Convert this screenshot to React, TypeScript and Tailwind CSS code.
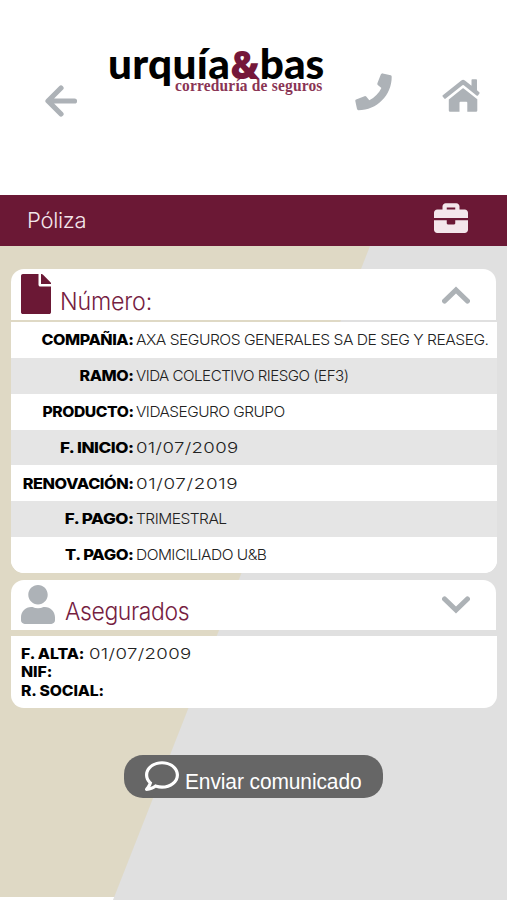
import React from "react";
import { FaBriefcase, FaFile, FaUser, FaRegComment } from "react-icons/fa";

const rows = [
  { label: "COMPAÑIA:", value: "AXA SEGUROS GENERALES SA DE SEG Y REASEG.", l: "scale-x-[1.07]", v: "tracking-[-0.5px] scale-x-[1.042]" },
  { label: "RAMO:", value: "VIDA COLECTIVO RIESGO (EF3)", l: "scale-x-[1.07]", v: "tracking-[-0.5px] scale-x-[1.01]" },
  { label: "PRODUCTO:", value: "VIDASEGURO GRUPO", l: "scale-x-[1.045]", v: "tracking-[-0.5px] scale-x-[1.027]" },
  { label: "F. INICIO:", value: "01/07/2009", l: "scale-x-[1.14]", v: "tracking-[0.3px] scale-x-[1.24]" },
  { label: "RENOVACIÓN:", value: "01/07/2019", l: "scale-x-[1.085]", v: "tracking-[0.5px] scale-x-[1.255]" },
  { label: "F. PAGO:", value: "TRIMESTRAL", l: "scale-x-[1.135]", v: "tracking-[-0.5px] scale-x-[1.035]" },
  { label: "T. PAGO:", value: "DOMICILIADO U&B", l: "scale-x-[1.105]", v: "tracking-[-0.5px] scale-x-[1.035]" },
];

function Chevron({ down = false }: { down?: boolean }) {
  return (
    <svg viewBox="0 0 28 18" className={"h-[18px] w-[28px] " + (down ? "rotate-180" : "")} fill="none" stroke="#adb2b6" strokeWidth="5.2" strokeLinecap="round">
      <path d="M2.600 15 14 4 25.400 15" />
    </svg>
  );
}

export default function App() {
  return (
    <div className="flex h-[900px] w-[507px] flex-col overflow-hidden bg-white font-['Inter',sans-serif] text-black">
      <header className="flex h-[195px] shrink-0 items-start">
        <svg viewBox="0 0 34 32" className="mt-[85px] ml-[44px] h-8 w-[34px] shrink-0" fill="none" stroke="#adb2b7" strokeWidth="5.2" strokeLinecap="round" strokeLinejoin="round">
          <path d="M17 3 4 16 17 29M4.5 16H30.500" />
        </svg>
        <div className="mt-[39px] ml-[30px] w-[216px] shrink-0 whitespace-nowrap">
          <div className="flex h-[40px] origin-left scale-x-[1.02] items-baseline font-['Lato',sans-serif] text-[41.5px] leading-[48px] font-black">
            <span className="tracking-[0.3px]">urquía</span><span className="w-[29px] origin-left scale-x-[0.93] font-['Open_Sans',sans-serif] text-[38px] leading-[48px] font-extrabold text-[#75173a]">&amp;</span>bas
          </div>
          <div className="ml-[66px] w-fit origin-left scale-x-[0.965] pl-[1px] font-['Liberation_Serif',serif] text-[16px] leading-[14px] font-bold tracking-[0.2px] text-[#8a3454]">
            correduría de seguros
          </div>
        </div>
        <svg viewBox="0 0 37 38" className="mt-[73px] ml-[31px] h-[38px] w-[37px] shrink-0" fill="#adb2b7">
          <path d="M26.500 .7Q27 .2 27.700 .4L35.700 2.300Q36.700 2.600 36.700 3.700C36.700 22 22 37.200 3.400 37.200Q2.300 37.200 2 36.100L.3 28Q.1 26.900 1.100 26.500L9.500 23.200Q10.500 22.800 11.200 23.600L14.300 27.300C19.600 24.700 24 20.200 26.400 15L22.800 12Q22 11.300 22.400 10.300L25.800 1.600Z" />
        </svg>
        <svg viewBox="0 0 38 34" className="mt-[79px] ml-[50px] h-[34px] w-[38px] shrink-0" fill="#adb2b7">
          <path d="M.6 17.500Q.1 16.800.8 16.200L19.300 1.400Q21.100.2 22.900 1.400L29.500 6.800V1Q29.500.2 30.300.2H34.200Q35 .2 35 1V11.300L37.300 13.200Q38 13.800 37.400 14.600L36 16.400Q35.300 17.200 34.500 16.500L21.800 6.300Q21.100 5.800 20.400 6.300L3.700 19.600Q2.900 20.200 2.300 19.500Z" />
          <path d="M6.800 20.400 20.500 9.400Q21.100 9 21.700 9.400L35.300 20.300V31.500Q35.300 32.800 34 32.800H25.300V23.800Q25.300 22.800 24.300 22.800H18.500Q17.500 22.800 17.500 23.800V32.800H8.100Q6.800 32.800 6.800 31.500Z" />
        </svg>
      </header>

      <div className="flex h-[51px] shrink-0 items-center justify-between bg-[#6b1835] pr-[39px] pl-[27px] text-[#f3e6eb]">
        <span className="text-[22px] font-light tracking-[-0.3px]">Póliza</span>
        <FaBriefcase className="mt-[-5px] h-[34px] w-[34px]" />
      </div>

      <main className="flex h-[654px] shrink-0 flex-col bg-[linear-gradient(#dfd9c5_0_651px,#ffffff_651px)]">
        <div className="flex h-full flex-col bg-[#e0e0e0] [clip-path:polygon(370px_0,507px_0,507px_654px,113px_654px)]" />
        <div className="relative z-10 -mt-[654px] flex h-full flex-col pt-[23px] pr-[10px] pl-[11px]">
          <section>
            <div className="mr-[1px] flex h-[51px] items-start rounded-t-[13px] bg-white pr-[26px] pl-[10px]">
              <FaFile className="mt-[5px] h-[40px] w-[30px] text-[#6b1835]" />
              <h2 className="mt-[15.5px] ml-[9px] flex-1 origin-left scale-x-[0.968] text-[24px] leading-[34px] font-light tracking-[-0.2px] text-[#75203f]">Número:</h2>
              <div className="mt-[17px]"><Chevron /></div>
            </div>
            <div className="mt-[2px] overflow-hidden rounded-b-[13px] bg-white">
              {rows.map((r, i) => (
                <div key={r.label} className={"flex h-[35.86px] items-center pt-px text-[15px] whitespace-nowrap " + (i % 2 ? "bg-[#e5e5e5]" : "bg-white")}>
                  <span className={"w-[122.5px] shrink-0 origin-right text-right font-extrabold tracking-[-0.4px] " + r.l}>{r.label}</span>
                  <span className={"ml-[2.5px] origin-left font-light text-[#222] " + r.v}>{r.value}</span>
                </div>
              ))}
            </div>
          </section>

          <section className="mt-[7px]">
            <div className="mr-[1px] flex h-[50px] items-start rounded-t-[13px] bg-white pr-[26px] pl-[10px]">
              <FaUser className="mt-[5px] h-[39px] w-[34px] text-[#adb2b7]" />
              <h2 className="mt-[14.5px] ml-[10px] flex-1 text-[24px] leading-[34px] font-light text-[#75203f]">
                <span className="inline-block origin-left scale-x-[0.955] tracking-[-0.4px]">Asegurados</span>
              </h2>
              <div className="mt-[16px]"><Chevron down /></div>
            </div>
            <div className="mt-[6px] h-[72px] rounded-b-[13px] bg-white pt-[8.5px] pl-[10px] text-[15px] leading-[18.5px]">
              <p className="flex">
                <b className="w-[68px] origin-left scale-x-[1.06] font-extrabold tracking-[-0.1px]">F. ALTA:</b>
                <span className="origin-left scale-x-[1.24] font-light tracking-[0.3px] text-[#222]">01/07/2009</span>
              </p>
              <p className="w-fit origin-left scale-x-[1.06] font-extrabold tracking-[-0.1px]">NIF:</p>
              <p className="w-fit origin-left scale-x-[1.05] font-extrabold tracking-[-0.1px]">R. SOCIAL:</p>
            </div>
          </section>

          <button className="mt-[47px] ml-[113px] flex h-[43px] w-[259px] items-start rounded-[19px] bg-[#666666] pl-[21px] text-white">
            <FaRegComment className="mt-[4px] h-[34px] w-[34px]" />
            <span className="mt-[10.5px] ml-[6px] origin-left scale-x-[0.952] font-['Liberation_Sans',sans-serif] text-[22px] leading-[32px] tracking-[-0.1px] whitespace-nowrap">Enviar comunicado</span>
          </button>
        </div>
      </main>
    </div>
  );
}
